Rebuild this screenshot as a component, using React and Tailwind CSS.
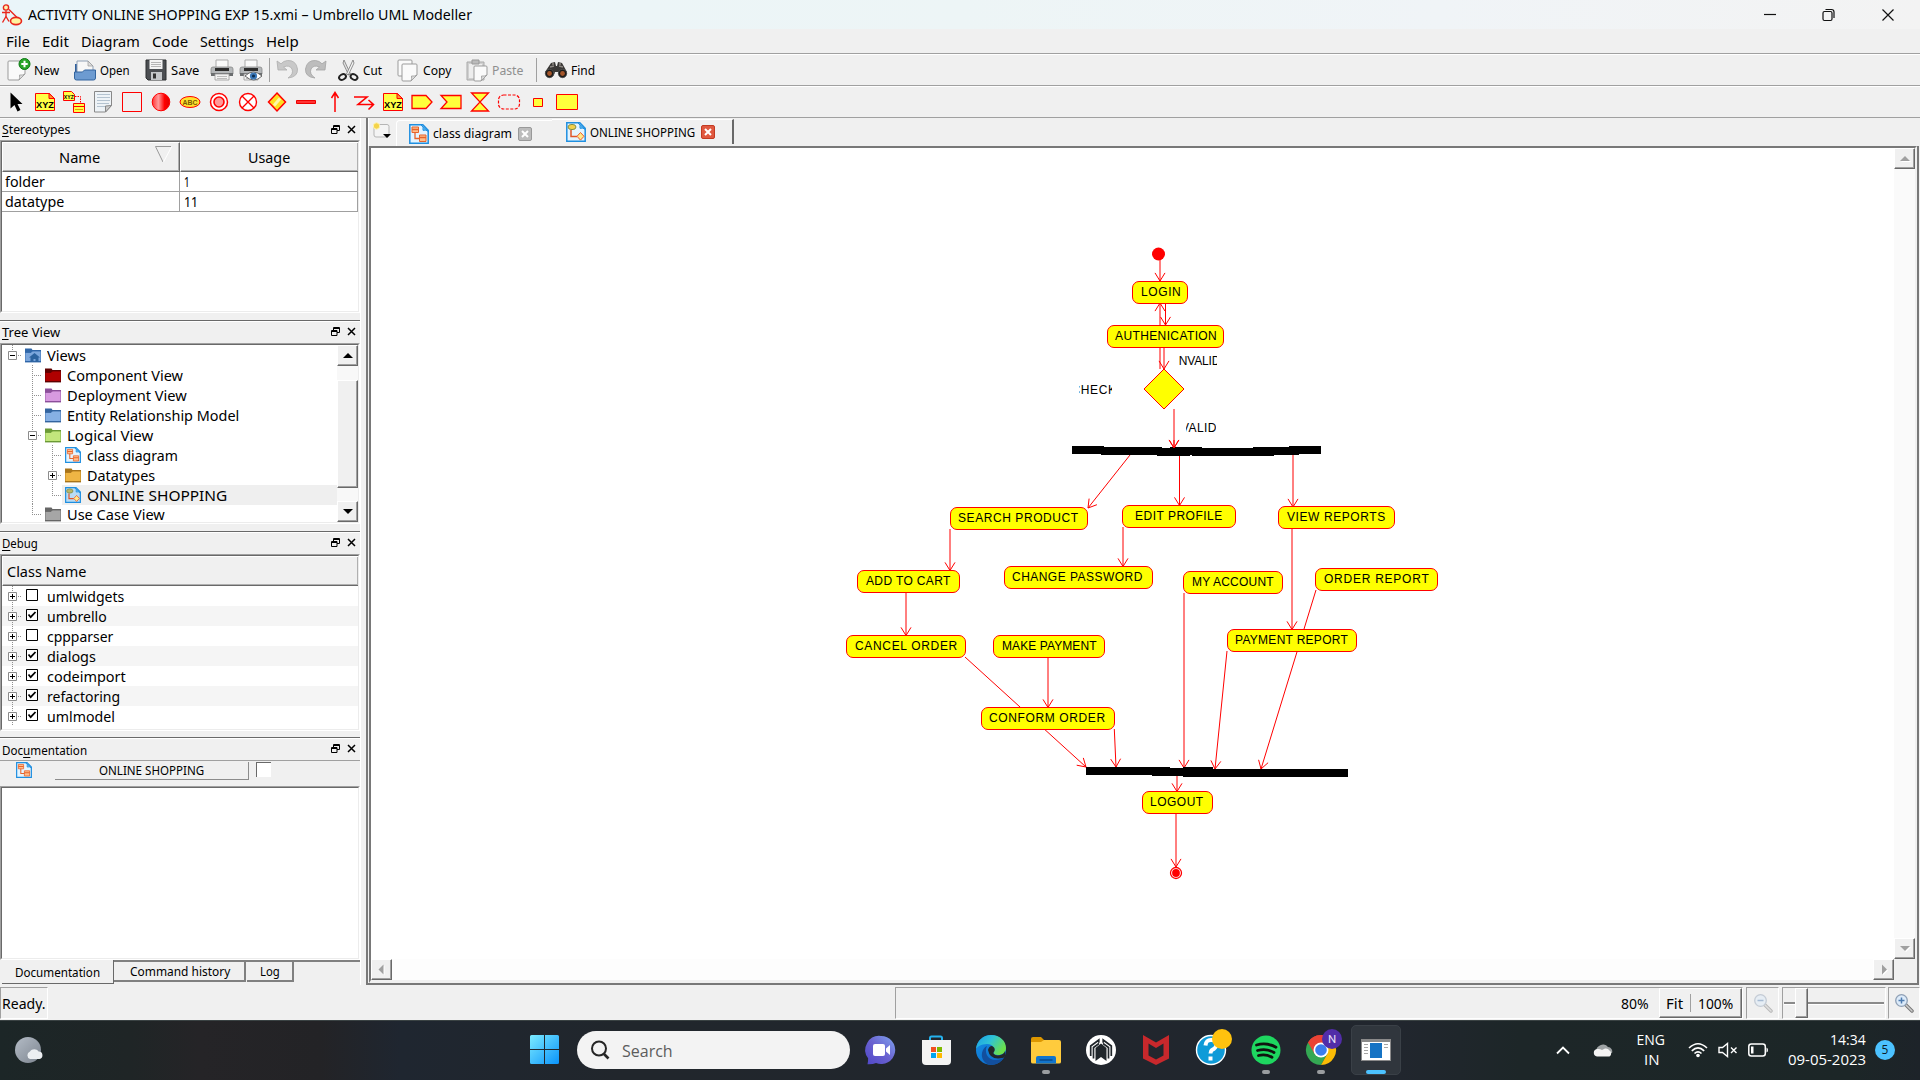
import React, { useLayoutEffect, useRef } from "react";

/* Single line of text fitted to a given width, either by condensing or by tracking. */
function Fit({ w, children, className = "", track = false }) {
  const ref = useRef(null);
  useLayoutEffect(() => {
    const el = ref.current;
    const natural = el.offsetWidth;
    if (!natural) return;
    if (track) {
      el.style.letterSpacing = (w - natural) / Math.max(1, el.textContent.length) + "px";
    } else {
      el.style.transform = "scaleX(" + w / natural + ")";
    }
  }, [w, track]);
  return (
    <span className={"inline-block shrink-0 whitespace-nowrap " + className} style={{ width: w }}>
      <span ref={ref} className="inline-block origin-left whitespace-nowrap">
        {children}
      </span>
    </span>
  );
}

function Svg({ w = 24, h = 24, vb, children, className = "" }) {
  return (
    <svg width={w} height={h} viewBox={vb || "0 0 " + w + " " + h} className={"block shrink-0 " + className} fill="none">
      {children}
    </svg>
  );
}

/* ---------- toolbar icons ---------- */
const Page = ({ x = 3, y = 3, w = 16, h = 19 }) => (
  <g>
    <path d={`M${x + 1} ${y}h${w - 2}q1 0 1 1v${h - 7}l-6 6h-${w - 7}q-1 0-1-1v-${h - 2}q0-1 1-1z`} fill="#fafafa" stroke="#9b9b9b" />
    <path d={`M${x + w} ${y + h - 6}l-6 6q1-2 .5-5q3 .5 5.500-1z`} fill="#ddd" stroke="#9b9b9b" strokeWidth=".8" />
  </g>
);
const NewIcon = () => (
  <Svg>
    <Page x={1} y={3} w={17} h={19} />
    <circle cx="17.500" cy="6" r="5.500" fill="#2aa52a" stroke="#0b7a12" />
    <path d="M17.500 2.800v6.400M14.300 6h6.400" stroke="#fff" strokeWidth="2" />
  </Svg>
);
const OpenIcon = () => (
  <Svg>
    <path d="M2 6h6l2 3v10H2z" fill="#2f5f9c" />
    <path d="M4 3h11l5 5v10H4z" fill="#f7f7f7" stroke="#8fa0b5" />
    <path d="M15 3v5h5z" fill="#ddd" stroke="#999" strokeWidth=".7" />
    <path d="M1.500 14h8l2-2h11v8q0 2-2 2h-17q-2 0-2-2z" fill="#6d9bd1" stroke="#34659f" />
  </Svg>
);
const SaveIcon = () => (
  <Svg>
    <path d="M2 2h20v20H4l-2-2z" fill="#4b4e52" stroke="#2d2f31" />
    <path d="M5.500 2h13v9h-13z" fill="#f4f4f4" />
    <path d="M7 4.500h10M7 6.500h10M7 8.500h10" stroke="#b5b5b5" />
    <path d="M7 14h11v8H7z" fill="#c4c7ca" />
    <path d="M9 15.500h3v5H9z" fill="#333" />
  </Svg>
);
const Printer = () => (
  <g>
    <path d="M6 2h12v8H6z" fill="#fafafa" stroke="#aaa" />
    <path d="M3 9h18q2 0 2 2v5H1v-5q0-2 2-2z" fill="#b4b7b9" stroke="#888" strokeWidth=".8" />
    <path d="M5 10h14v3H5z" fill="#2d2d2d" />
    <path d="M1 15h22v3H1z" fill="#6a6d6f" />
    <path d="M5 16h14v6H5z" fill="#f2f2f2" stroke="#999" strokeWidth=".8" />
    <path d="M7 18.500h10M7 20.500h10" stroke="#bbb" />
  </g>
);
const PrintIcon = () => (
  <Svg>
    <Printer />
  </Svg>
);
const PreviewIcon = () => (
  <Svg>
    <Printer />
    <path d="M6 18q8-8 17 0q-8 8-17 0z" fill="#fff" stroke="#666" />
    <circle cx="14.500" cy="18" r="3.600" fill="#3b78b8" />
    <circle cx="14.500" cy="18" r="1.600" fill="#0c2d50" />
  </Svg>
);
const undoPath = "M2 3l1 9h9l-3.500-3q6-2.500 8.500 2q2 5-4 9q10-1 9.500-9q-1.500-9-10-8.500q-4 .3-6.500 3.300z";
const UndoIcon = () => (
  <Svg>
    <path d={undoPath} fill="#c8c8c8" stroke="#adadad" strokeWidth=".8" />
  </Svg>
);
const RedoIcon = () => (
  <Svg>
    <g transform="translate(24 0) scale(-1 1)">
      <path d={undoPath} fill="#bdbdbd" stroke="#a3a3a3" strokeWidth=".8" />
    </g>
  </Svg>
);
const CutIcon = () => (
  <Svg>
    <path d="M8 2l6.500 14-1.800 1L7 5z" fill="#e2e2e2" stroke="#777" strokeWidth=".8" />
    <path d="M17 2L10.500 16l1.800 1L18 5z" fill="#f5f5f5" stroke="#777" strokeWidth=".8" />
    <ellipse cx="6.500" cy="19" rx="3.600" ry="2.600" transform="rotate(-30 6.500 19)" stroke="#222" strokeWidth="2" />
    <ellipse cx="18" cy="19" rx="3.600" ry="2.600" transform="rotate(30 18 19)" stroke="#222" strokeWidth="2" />
  </Svg>
);
const CopyIcon = () => (
  <Svg>
    <Page x={2} y={2} w={14} h={16} />
    <Page x={6} y={6} w={15} h={17} />
  </Svg>
);
const PasteIcon = () => (
  <Svg>
    <path d="M2 4h17v18H2z" fill="#d0d0d0" stroke="#aaa" />
    <path d="M4 6h13v14H4z" fill="#ededed" />
    <path d="M7 2h7v4H7z" fill="#bbb" stroke="#999" />
    <Page x={9} y={8} w={13} h={15} />
  </Svg>
);
const FindIcon = () => (
  <Svg>
    <path d="M7 5l4-1 1 4h1l1-4 4 1 5 9q0 5-4 5.500-4-.5-5-5.500h-3q-1 5-5 5.500-4-.5-5-5.500z" fill="#3a3836" />
    <path d="M8 6l2 0M15 6h2M6 9l4-1M15 8l4 1" stroke="#8d8883" strokeWidth="1.300" />
    <circle cx="5.500" cy="15.500" r="4.200" fill="#1c1b1a" stroke="#555" strokeWidth=".8" />
    <circle cx="18.500" cy="15.500" r="4.200" fill="#1c1b1a" stroke="#555" strokeWidth=".8" />
    <circle cx="5.500" cy="15.500" r="2.400" fill="#a5562a" />
    <circle cx="18.500" cy="15.500" r="2.400" fill="#a5562a" />
  </Svg>
);

const mainTools = [
  { icon: NewIcon, label: "New", tw: 25, cls: "w-[66px]" },
  { icon: OpenIcon, label: "Open", tw: 30, cls: "w-[71px]" },
  { icon: SaveIcon, label: "Save", tw: 28, cls: "w-[66px]" },
  { icon: PrintIcon, cls: "w-[29px]" },
  { icon: PreviewIcon, cls: "w-[29px]" },
  { sep: true, cls: "w-[7px]" },
  { icon: UndoIcon, cls: "w-[29px]" },
  { icon: RedoIcon, cls: "w-[32px]" },
  { icon: CutIcon, label: "Cut", tw: 19, cls: "w-[60px]" },
  { icon: CopyIcon, label: "Copy", tw: 28, cls: "w-[69px]" },
  { icon: PasteIcon, label: "Paste", tw: 31, cls: "w-[70px]", dim: true },
  { sep: true, cls: "w-[9px]" },
  { icon: FindIcon, label: "Find", tw: 24, cls: "w-[60px]" },
];

const XYZ = () => (
  <g>
    <path d="M1.500 2.500h14l5 5v12h-19z" fill="#ffff45" stroke="#f00" />
    <path d="M15 2.500v5h5.500z" fill="#ff9a2e" stroke="#f00" />
    <text x="11" y="17" textAnchor="middle" fontSize="9.500" fontWeight="700" fill="#000" textLength="18" lengthAdjust="spacingAndGlyphs" fontFamily="Liberation Sans, sans-serif">XYZ</text>
  </g>
);
const umlTools = [
  <path d="M5.500 1.500v16l4-3.500 3 6.500 3-1.500-3-6h5z" fill="#000" />,
  <XYZ />,
  <g>
    <path d="M.5 .5h8l3 3v6h-11z" fill="#ff4" stroke="#f00" />
    <text x="5.800" y="8" textAnchor="middle" fontSize="6" fontWeight="700" fill="#000" textLength="10" lengthAdjust="spacingAndGlyphs" fontFamily="Liberation Sans, sans-serif">XYZ</text>
    <path d="M12 5.500h5.500V12" stroke="#f00" strokeDasharray="1.500 1" />
    <path d="M10.500 12.500h11v9h-11zM10.500 15.500h11" fill="#ffff45" stroke="#f00" />
    <path d="M12 18.500h8" stroke="#e0a000" />
  </g>,
  <g>
    <path d="M2.500 .5h17v14l-6 6.500h-11z" fill="#eef3f7" stroke="#888" />
    <path d="M5 3.500h13M5 6.500h13M5 9.500h13M5 12.500h12M5 15.500h8" stroke="#b4c3d0" />
    <path d="M19.500 14.500l-6 6.500v-6z" fill="#ccc" stroke="#888" />
  </g>,
  <path d="M1.500 1.500h19v19h-19z" stroke="#f00" />,
  <g>
    <defs>
      <linearGradient id="start" x1="0" y1="0" x2="1" y2="0">
        <stop offset="0" stopColor="#f33" />
        <stop offset=".35" stopColor="#ff9c9c" />
        <stop offset=".7" stopColor="#f00" />
        <stop offset="1" stopColor="#d00" />
      </linearGradient>
    </defs>
    <circle cx="11" cy="11" r="8.800" fill="url(#start)" stroke="#f00" />
  </g>,
  <g>
    <ellipse cx="11" cy="11" rx="10" ry="5.500" fill="#ffe22e" stroke="#f00" />
    <text x="11" y="14" textAnchor="middle" fontSize="7.500" fontWeight="700" fill="#7a5a00" textLength="15" lengthAdjust="spacingAndGlyphs" fontFamily="Liberation Sans, sans-serif">ABC</text>
  </g>,
  <g>
    <circle cx="11" cy="11" r="8.500" fill="#fff" stroke="#f00" strokeWidth="1.500" />
    <circle cx="11" cy="11" r="5" fill="#f99" stroke="#f00" strokeWidth="1.600" />
  </g>,
  <g stroke="#f00" strokeWidth="1.400">
    <circle cx="11" cy="11" r="8.500" fill="#fff" />
    <path d="M5 5l12 12M17 5L5 17" />
  </g>,
  <g>
    <path d="M11 2l8.500 9-8.500 9-8.500-9z" fill="#ffdf20" stroke="#f00" strokeWidth="1.500" />
    <path d="M8 14.500l6-7" stroke="#fff9a8" strokeWidth="3" />
  </g>,
  <path d="M1.500 9.500h19v3h-19z" fill="#f33" stroke="#e00" />,
  <path d="M11 21V2M7.500 7L11 1.500 14.500 7" stroke="#f00" strokeWidth="1.500" />,
  <path d="M1 6h13L5 13.500h15M15.500 9l5 4.500-5 5" stroke="#f00" strokeWidth="1.600" />,
  <XYZ />,
  <path d="M1 4.500h14l6 6.500-6 6.500H1z" fill="#ffff3c" stroke="#f00" strokeWidth="1.300" />,
  <path d="M1 4.500h20v13H1l6-6.500z" fill="#ffff3c" stroke="#f00" strokeWidth="1.300" />,
  <path d="M2.500 2h17L2.500 20h17z" fill="#ffff3c" stroke="#f00" strokeWidth="1.300" />,
  <rect x="0.500" y="4" width="21" height="14" rx="5" stroke="#f00" strokeWidth="1.200" strokeDasharray="3 1.500" />,
  <path d="M6.500 7.500h9v8h-9z" fill="#ffff3c" stroke="#f80000" />,
  <path d="M.5 3.500h21v15H.5z" fill="#ffff3c" stroke="#f00" />,
];

/* ---------- small shared pieces ---------- */
function DiagramIcon({ size = 16, activity = false, selected = false }) {
  return (
    <Svg w={size} h={size} vb="0 0 20 20">
      <path d="M.8.8h13l5.400 5.400v13H.8z" fill={selected ? "#b8dcf5" : "#e4f4ff"} stroke="#1f8fe0" strokeWidth="1.500" />
      <path d="M12 .8q3 2 2 5.500 3-.8 5.200 1z" fill="#5cb8f0" stroke="#1f8fe0" />
      {activity ? (
        <g>
          <ellipse cx="6" cy="5" rx="4" ry="2.600" fill={selected ? "#b9b56a" : "#f2d04a"} stroke="#7f8f4a" />
          <path d="M5 8v6.500h6" stroke="#e0552a" strokeWidth="1.500" />
          <path d="M14.500 10.500l3.500 3.800-3.500 3.800-3.500-3.800z" fill="#ffe98a" stroke="#f05a2a" />
        </g>
      ) : (
        <g>
          <path d="M3 3h6.500v5.500H3zM10.500 11H17v6.500h-6.500z" fill="#ffbe8c" stroke="#e8632a" />
          <path d="M3 5.500h6.500M10.500 13.500H17M6 8.500v6h4.500" stroke="#e8632a" strokeWidth="1.300" />
        </g>
      )}
    </Svg>
  );
}

function Folder({ light, dark, home }) {
  return (
    <Svg w={16} h={16}>
      <path d="M0 1.500h6.500l1 1.500H16v4H0z" fill={dark} />
      <path d="M0 5.500h6l1.500-1.500H16V15H0z" fill={light} stroke={dark} strokeWidth=".8" />
      <path d="M0 14.500h16" stroke={dark} />
      {home && <path d="M4 10.500l5.500-4.500L15 10.500h-1.500V15h-3v-3h-2v3h-3v-4.500z" fill="#2c639f" />}
    </Svg>
  );
}

function Guide({ kind, box }) {
  const c = "#909090";
  return (
    <Svg w={20} h={20}>
      {kind !== "blank" && (
        <g stroke={c} strokeDasharray="1 1">
          {kind === "root" && <path d="M10.500 0v10M10 10.500h10" />}
          {kind === "tee" && <path d="M10.500 0v20M10 10.500h10" />}
          {kind === "bar" && <path d="M10.500 0v20" />}
          {kind === "end" && <path d="M10.500 0v10M10 10.500h10" />}
        </g>
      )}
      {box && (
        <g>
          <path d="M6.500 6.500h8v8h-8z" fill="#fff" stroke="#8c8c8c" />
          <path d={box === "plus" ? "M8 10.500h5M10.500 8v5" : "M8 10.500h5"} stroke="#000" />
        </g>
      )}
    </Svg>
  );
}

function Arrow({ dir, dim }) {
  const d = { up: "M0 6l5-5 5 5z", down: "M0 1l5 5 5-5z", left: "M6.500-1.500l-5 5 5 5z", right: "M3-1.500l5 5-5 5z" }[dir];
  return (
    <Svg w={10} h={7} className="overflow-visible">
      {dim && <path d={d} fill="#fff" transform="translate(1 1)" />}
      <path d={d} fill={dim ? "#a0a0a0" : "#000"} />
    </Svg>
  );
}

const raised = "border border-t-white border-l-white border-r-[#696969] border-b-[#696969] bg-[#f0f0f0] shadow-[inset_-1px_-1px_0_#a0a0a0]";
function ScrollButton({ dir, dim }) {
  return (
    <div className={"flex h-[21px] w-[21px] shrink-0 items-center justify-center " + raised}>
      <Arrow dir={dir} dim={dim} />
    </div>
  );
}

function Dock({ title, accel, tw, h, first, gap, titleGap = "", children }) {
  return (
    <section className="flex flex-col bg-[#f0f0f0]" style={{ height: h }}>
      <header
        className={
          "flex shrink-0 items-center pl-[2px] text-[13px] leading-none " +
          (first ? "h-[22px] border-t border-[#fafafa]" : "h-[23px] border-t border-[#696969] shadow-[inset_0_1px_0_#fff]")
        }
      >
        <Fit w={tw} className={titleGap}>
          {title.slice(0, accel)}
          <span className="underline underline-offset-2">{title[accel]}</span>
          {title.slice(accel + 1)}
        </Fit>
        <Svg w={9} h={9} className="-mt-px ml-auto">
          <path d="M2.500 3V.5h6v5H6M2.500 1.500h6M.5 3.500h5.500v5H.5zM.5 4.500H6" stroke="#000" />
        </Svg>
        <Svg w={9} h={9} className="-mt-px mr-[4px] ml-[7px]">
          <path d="M1 1l7 7M8 1L1 8" stroke="#000" strokeWidth="1.500" />
        </Svg>
      </header>
      <div className={"flex min-h-0 flex-1 flex-col " + gap}>{children}</div>
    </section>
  );
}

function Frame({ children, className = "" }) {
  return (
    <div className={"min-h-0 flex-1 border border-t-[#a0a0a0] border-l-[#a0a0a0] border-r-white border-b-white " + className}>
      <div className="h-full overflow-hidden border border-t-[#696969] border-l-[#696969] border-r-[#ececec] border-b-[#ececec] bg-white">
        {children}
      </div>
    </div>
  );
}

const header = "flex items-center border border-t-white border-l-white border-r-[#696969] border-b-[#696969] bg-[#f0f0f0] shadow-[inset_-1px_-1px_0_#b0b0b0]";

/* ---------- left docks ---------- */
const folders = {
  home: <Folder light="#7ba6dc" dark="#2f66a8" home />,
  red: <Folder light="#b00000" dark="#5e0000" />,
  violet: <Folder light="#d79ae0" dark="#8c4f9a" />,
  blue: <Folder light="#86b0e4" dark="#33649f" />,
  green: <Folder light="#c2e67c" dark="#6b9a35" />,
  orange: <Folder light="#eeb544" dark="#a8741a" />,
  grey: <Folder light="#a6a6a6" dark="#666" />,
};
const tree = [
  { g: [["root", "minus"]], icon: folders.home, t: "Views", w: 39 },
  { g: [["blank"], ["tee"]], icon: folders.red, t: "Component View", w: 116 },
  { g: [["blank"], ["tee"]], icon: folders.violet, t: "Deployment View", w: 120 },
  { g: [["blank"], ["tee"]], icon: folders.blue, t: "Entity Relationship Model", w: 172 },
  { g: [["blank"], ["tee", "minus"]], icon: folders.green, t: "Logical View", w: 86 },
  { g: [["blank"], ["bar"], ["tee"]], icon: <DiagramIcon />, t: "class diagram", w: 91 },
  { g: [["blank"], ["bar"], ["tee", "plus"]], icon: folders.orange, t: "Datatypes", w: 68 },
  { g: [["blank"], ["bar"], ["end"]], icon: <DiagramIcon activity selected />, t: "ONLINE SHOPPING", w: 140, sel: true },
  { g: [["blank"], ["end"]], icon: folders.grey, t: "Use Case View", w: 98 },
];
const debugRows = [
  ["umlwidgets", 77, false],
  ["umbrello", 60, true],
  ["cppparser", 66, false],
  ["dialogs", 49, true],
  ["codeimport", 79, true],
  ["refactoring", 73, true],
  ["umlmodel", 68, true],
];

function LeftDocks() {
  return (
    <aside className="flex w-[361px] shrink-0 flex-col border-r border-white text-[15px] leading-none">
      <Dock title="Stereotypes" accel={0} tw={68} h={202} first gap="pb-[7px]">
        <Frame>
          <div className="flex h-[30px] w-[357px]">
            <div className={"w-[178px] pl-[56px] " + header}>
              <Fit w={41}>Name</Fit>
              <Svg w={17} h={17} className="-mt-[6px] ml-[55px]">
                <path d="M16 .5H.5L8 16" stroke="#999" />
                <path d="M16.500 1L8.500 16" stroke="#fff" />
              </Svg>
            </div>
            <div className={"flex-1 justify-center pr-[2px] " + header}>
              <Fit w={42}>Usage</Fit>
            </div>
          </div>
          {[["folder", 40, "1", 6], ["datatype", 59, "11", 14]].map(([a, aw, b, bw]) => (
            <div key={a} className="flex h-[20px] w-[356px] border-r border-b border-[#a0a0a0]">
              <div className="flex w-[178px] items-center border-r border-[#a0a0a0] pl-[3px]">
                <Fit w={aw}>{a}</Fit>
              </div>
              <div className="flex items-center pl-[4px]">
                <Fit w={bw}>{b}</Fit>
              </div>
            </div>
          ))}
        </Frame>
      </Dock>

      <Dock title="Tree View" accel={0} tw={58} h={211} gap="pb-[7px]">
        <Frame>
          <div className="flex h-full">
            <div className="flex-1">
              {tree.map((r, i) => (
                <div key={r.t} className={"flex items-center " + (i === tree.length - 1 ? "h-[18px]" : "h-[20px]")}>
                  {r.g.map(([k, b], j) => (
                    <Guide key={j} kind={k} box={b} />
                  ))}
                  <div className={"flex h-full flex-1 items-center gap-[6px] pl-[3px] " + (r.sel ? "bg-[#efefef]" : "")}>
                    {r.icon}
                    <Fit w={r.w}>{r.t}</Fit>
                  </div>
                </div>
              ))}
            </div>
            <div className="flex w-[21px] flex-col bg-[#f8f8f8]">
              <ScrollButton dir="up" />
              <div className={"mt-[14px] h-[108px] " + raised} />
              <div className="flex-1" />
              <ScrollButton dir="down" />
            </div>
          </div>
        </Frame>
      </Dock>

      <Dock title="Debug" accel={0} tw={36} h={206} gap="pb-[6px]">
        <Frame>
          <div className={"h-[30px] w-[357px] pl-[4px] " + header}>
            <Fit w={79}>Class Name</Fit>
          </div>
          {debugRows.map(([t, w, on], i) => (
            <div key={t} className={"flex h-[20px] items-center " + (i % 2 ? "bg-[#f5f5f5]" : "bg-white")}>
              <Guide kind="tee" box="plus" />
              <Svg w={12} h={12} className="mr-[9px] ml-[4px] -mt-[3px]">
                <path d="M.5.5h11v11H.5z" fill="#fff" stroke="#000" />
                {on && <path d="M2.500 5.500l2.200 2.700L9.500 3" stroke="#000" strokeWidth="1.800" />}
              </Svg>
              <Fit w={w}>{t}</Fit>
            </div>
          ))}
        </Frame>
      </Dock>

      <Dock title="Documentation" accel={3} tw={85} h={248} gap="" titleGap="pt-[2px]">
        <div className="flex h-[26px] shrink-0 items-start border-t border-[#a0a0a0] pt-px pl-[16px] text-[13px]">
          <DiagramIcon />
          <div className="ml-[23px] flex h-[18px] w-[194px] items-center justify-center border-r border-b border-[#8c8c8c]">
            <Fit w={105}>ONLINE SHOPPING</Fit>
          </div>
          <div className="ml-[7px] h-[15px] w-[15px] border-t border-l border-[#696969] bg-white" />
        </div>
        <Frame>
          <div />
        </Frame>
        <div className="flex h-[25px] shrink-0 text-[13px]">
          <div className="ml-[2px] flex h-[24px] w-[112px] items-center justify-center border-r border-b border-[#696969] pt-[2px]">
            <Fit w={85}>Documentation</Fit>
          </div>
          <div className="flex flex-1 border-t-2 border-[#808080]">
            <div className="flex h-[20px] w-[132px] items-center justify-center border-r-2 border-b-2 border-[#808080] pt-px pl-px">
              <Fit w={100}>Command history</Fit>
            </div>
            <div className="ml-px flex h-[20px] w-[47px] items-center justify-center border-r-2 border-b-2 border-[#808080] pt-px pl-px">
              <Fit w={20}>Log</Fit>
            </div>
          </div>
        </div>
      </Dock>
    </aside>
  );
}

/* ---------- activity diagram ---------- */
const OX = 371;
const OY = 148;
const nodes = [
  ["LOGIN", 1132, 281, 56, 1141, 40],
  ["AUTHENICATION", 1107, 325, 117, 1115, 102],
  ["SEARCH PRODUCT", 950, 507.5, 138, 958, 121],
  ["EDIT PROFILE", 1122.5, 505.5, 113.5, 1135, 88],
  ["VIEW REPORTS", 1278.5, 506.5, 116.5, 1287, 99],
  ["ADD TO CART", 857.5, 570.5, 102.5, 866, 85],
  ["CHANGE PASSWORD", 1004, 566.5, 148.5, 1012, 131],
  ["MY ACCOUNT", 1183.5, 571.5, 99.500, 1192, 82],
  ["ORDER REPORT", 1315.5, 568.5, 122.5, 1324, 105],
  ["CANCEL ORDER", 846.5, 635.5, 119.5, 855, 103],
  ["MAKE PAYMENT", 993.5, 635.5, 112, 1002, 95],
  ["PAYMENT REPORT", 1227, 629.5, 130, 1235, 113],
  ["CONFORM ORDER", 981, 707.5, 133.5, 989, 117],
  ["LOGOUT", 1142, 791.5, 70.5, 1150, 54],
];
const edges = [
  [1160, 260, 1160, 281],
  [1160, 369, 1160, 303],
  [1165.5, 303, 1165.5, 325],
  [1164, 347, 1164, 369],
  [1174, 409, 1174, 448],
  [1130, 455, 1088, 508],
  [1179.5, 456, 1179.5, 505.5],
  [1293, 455, 1293, 507],
  [950, 529, 950, 570.5],
  [1123, 527, 1123, 566.5],
  [906, 592, 906, 635.5],
  [1292, 528, 1292, 629.5],
  [1316, 590, 1261, 769],
  [1227, 651, 1215, 769],
  [1184, 593, 1184, 768],
  [965, 657, 1086, 767],
  [1048, 657, 1048, 707.5],
  [1114.3, 729, 1116, 767],
  [1177, 776, 1177, 791.5],
  [1176, 813, 1176, 867],
];
const bars = [
  [1072, 446, 32, 8], [1101, 447, 61, 8], [1157, 448, 33, 8], [1170, 447, 32, 8], [1192, 448, 82, 8], [1253, 447, 46, 8], [1289, 446, 32, 8],
  [1086, 767, 84, 8], [1152, 768, 61, 8], [1183, 767, 30, 8], [1183, 769, 165, 8],
];
const labels = [
  ["INVALID", 1178.5, 354, 38.5, -3, 45],
  ["CHECK", 1078.5, 383, 33.5, -7, 45],
  ["VALID", 1186, 421, 30, -5, 36],
];

function edgePath([x1, y1, x2, y2]) {
  const a = Math.atan2(y2 - y1, x2 - x1);
  const p = (s) => [x2 - 9.500 * Math.cos(a + s), y2 - 9.500 * Math.sin(a + s)].map((v) => v.toFixed(1)).join(" ");
  return `M${x1} ${y1}L${x2} ${y2}M${p(0.55)}L${x2} ${y2}L${p(-0.55)}`;
}

function Diagram() {
  return (
    <div className="relative min-h-0 min-w-0 flex-1 overflow-hidden bg-white">
      <Svg w={1200} h={800} vb={`${OX} ${OY} 1200 800`} className="absolute top-0 left-0">
        {edges.map((e, i) => (
          <path key={i} d={edgePath(e)} stroke="#f00" />
        ))}
        {bars.map(([x, y, w, h], i) => (
          <rect key={i} x={x} y={y} width={w} height={h} fill="#000" shapeRendering="crispEdges" />
        ))}
        <circle cx="1158.500" cy="254" r="6.500" fill="#f00" />
        <path d="M1164 369l20 20-20 20-20-20z" fill="#ff0" stroke="#f00" />
        <path d="M1174 440v8M1169.300 440l4.700 8 4.700-8" stroke="#f00" />
        <circle cx="1176" cy="873" r="5.500" fill="#fff" stroke="#f00" strokeWidth="1.300" />
        <circle cx="1176" cy="873" r="3.900" fill="#f00" />
      </Svg>
      {nodes.map(([t, x, y, w, tx, tw]) => (
        <div
          key={t}
          className="absolute flex h-[23px] items-center rounded-[7px] border border-[#ff0000] bg-[#ffff00] pb-px font-['Liberation_Sans',sans-serif] text-[12px] leading-none text-black"
          style={{ left: Math.floor(x) - OX, top: Math.floor(y) - OY, width: Math.ceil(w), paddingLeft: tx - Math.floor(x) - 1 }}
        >
          <Fit w={tw} track>{t}</Fit>
        </div>
      ))}
      {labels.map(([t, x, y, w, dx, tw]) => (
        <div
          key={t}
          className="absolute h-[14px] overflow-hidden font-['Liberation_Sans',sans-serif] text-[12px] leading-[14px] text-black"
          style={{ left: x - OX, top: y - OY, width: w }}
        >
          <div style={{ marginLeft: dx }}>
            <Fit w={tw} track>{t}</Fit>
          </div>
        </div>
      ))}
    </div>
  );
}

function CloseBox({ red }) {
  return (
    <Svg w={14} h={14}>
      <rect x=".5" y=".5" width="13" height="13" rx="1.500" fill={red ? "#e0583f" : "#bcbcbc"} stroke={red ? "#c23a22" : "#999"} />
      <path d="M4 4l6 6M10 4l-6 6" stroke="#fff" strokeWidth="2" />
    </Svg>
  );
}

function Workspace() {
  return (
    <main className="ml-[5px] flex min-w-0 flex-1 flex-col border-l-2 border-[#787878] text-[13px] leading-none">
      <div className="flex h-[28px] shrink-0 border-l border-white pl-[2px]">
        <Svg w={20} h={18} className="mt-[4px] ml-px">
          <path d="M3 2.500h12q2 0 2 2V13q0 2-2 2H4q-2 0-2-2V5z" fill="#f4f4f4" stroke="#b5b5b5" />
          <circle cx="4.500" cy="4" r="3.200" fill="#f4d34a" stroke="#fff3b0" />
          <path d="M11 12h8l-4 4z" fill="#000" />
        </Svg>
        <div className="mt-[2px] ml-[4px] flex h-[26px] w-[156px] items-center rounded-tl-sm border-t border-l border-white pl-[12px]">
          <DiagramIcon size={20} />
          <Fit w={79} className="ml-[4px]">class diagram</Fit>
          <span className="ml-[6px]">
            <CloseBox />
          </span>
        </div>
        <div className="mt-px flex h-[25px] w-[182px] items-center border-t border-r-2 border-t-white border-r-[#696969] pl-[14px]">
          <DiagramIcon size={20} activity />
          <Fit w={105} className="ml-[4px]">ONLINE SHOPPING</Fit>
          <span className="ml-[6px]">
            <CloseBox red />
          </span>
        </div>
      </div>
      <div className="mr-px flex min-h-0 flex-1 flex-col border-r-2 border-b-2 border-[#787878] pl-px">
        <div className="flex min-h-0 flex-1 flex-col border-t-2 border-r-2 border-b-3 border-l-2 border-t-[#787878] border-r-[#f0f0f0] border-b-[#f0f0f0] border-l-[#787878] bg-white">
          <div className="flex min-h-0 flex-1">
            <Diagram />
            <div className="flex w-[21px] flex-col justify-between bg-[#fafafa]">
              <ScrollButton dir="up" dim />
              <ScrollButton dir="down" dim />
            </div>
          </div>
          <div className="flex h-[21px] shrink-0 bg-[#f0f0f0]">
            <div className="flex flex-1 justify-between bg-[#fdfdfd]">
              <ScrollButton dir="left" dim />
              <ScrollButton dir="right" dim />
            </div>
            <div className="w-[21px]" />
          </div>
        </div>
      </div>
    </main>
  );
}

/* ---------- status bar ---------- */
const sunk = "border-t border-l border-r border-b border-t-[#a0a0a0] border-l-[#a0a0a0] border-r-white border-b-white";
function Magnifier({ plus, dim }) {
  return (
    <Svg w={20} h={20} className={dim ? "opacity-45" : ""}>
      <path d="M12 12l6 6" stroke="#777" strokeWidth="3.500" strokeLinecap="round" />
      <path d="M12 12l6 6" stroke="#ccc" strokeWidth="1.500" strokeLinecap="round" />
      <circle cx="7.500" cy="7.500" r="5.800" fill="#dcebfa" stroke="#8fa0b5" strokeWidth="1.300" />
      <path d={plus ? "M4.500 7.500h6M7.500 4.500v6" : "M4.500 7.500h6"} stroke="#4f7cb0" strokeWidth="1.500" />
    </Svg>
  );
}
function StatusBar() {
  return (
    <footer className="flex h-[35px] shrink-0 items-start bg-[#f0f0f0] pt-[2px] text-[15px] leading-none">
      <div className={"flex h-[32px] w-[48px] items-center pl-px " + sunk}>
        <Fit w={44}>Ready.</Fit>
      </div>
      <div className={"ml-[847px] flex h-[32px] w-[848px] items-center justify-end " + sunk}>
        <Fit w={28} className="mr-[10px]">80%</Fit>
        <div className={"flex h-[30px] w-[83px] items-center pl-[6px] " + raised}>
          <Fit w={17}>Fit</Fit>
          <div className="mx-[7px] h-[18px] w-px bg-[#a0a0a0]" />
          <Fit w={35}>100%</Fit>
        </div>
      </div>
      <div className={"ml-[3px] flex h-[32px] w-[33px] items-center justify-center " + sunk}>
        <Magnifier dim />
      </div>
      <div className={"ml-[3px] flex h-[32px] w-[104px] items-center px-px " + sunk}>
        <div className="h-[3px] w-[11px] border-t-2 border-b border-t-[#8a8a8a] border-b-white" />
        <div className={"h-[30px] w-[13px] " + raised} />
        <div className="h-[3px] flex-1 border-t-2 border-b border-t-[#8a8a8a] border-b-white" />
      </div>
      <div className={"ml-[2px] flex h-[32px] flex-1 items-center justify-center " + sunk}>
        <Magnifier plus />
      </div>
    </footer>
  );
}

/* ---------- taskbar ---------- */
const apps = [
  {
    k: "chat",
    art: (
      <g>
        <defs>
          <linearGradient id="chat" x1="0" y1="1" x2="1" y2="0">
            <stop offset="0" stopColor="#4f46c8" />
            <stop offset=".5" stopColor="#6a62d0" />
            <stop offset="1" stopColor="#7fa4f0" />
          </linearGradient>
        </defs>
        <path d="M15 1a14 14 0 1 1-5 27q-3 1.500-8.500 1.300q.8-3 .6-6A14 14 0 0 1 15 1z" fill="url(#chat)" />
        <rect x="7" y="9" width="12" height="12" rx="2" fill="#fff" />
        <path d="M20 13.500l4-3.500v10l-4-3.500z" fill="#fff" />
      </g>
    ),
  },
  {
    k: "store",
    art: (
      <g>
        <path d="M9 7V3q0-1.500 1.500-1.500h9Q21 1.500 21 3v4" stroke="#25b2ee" strokeWidth="2" />
        <path d="M1 5h29v21q0 4-4 4H5q-4 0-4-4z" fill="#f3f3f3" />
        <path d="M10 12h5v5h-5z" fill="#f25022" />
        <path d="M16 12h5v5h-5z" fill="#7fba00" />
        <path d="M10 18h5v5h-5z" fill="#00a4ef" />
        <path d="M16 18h5v5h-5z" fill="#ffb900" />
      </g>
    ),
  },
  {
    k: "edge",
    art: (
      <g>
        <defs>
          <linearGradient id="e1" x1="0" y1="0" x2="1" y2=".5">
            <stop offset="0" stopColor="#1a9de8" />
            <stop offset=".5" stopColor="#2fc3d6" />
            <stop offset="1" stopColor="#6be04c" />
          </linearGradient>
          <linearGradient id="e2" x1="0" y1="0" x2="1" y2="1">
            <stop offset="0" stopColor="#1590e6" />
            <stop offset="1" stopColor="#0a63c4" />
          </linearGradient>
        </defs>
        <circle cx="15" cy="15" r="15" fill="url(#e2)" />
        <path d="M0 14C1 5 8 0 15 0c9 0 15 6 15 13 0 5-4 7-8 7-3 0-5-1-4.500-2.500C20 14 17 9 11 9 5 9 1 12 0 14z" fill="url(#e1)" />
        <path d="M11 11c-3 6 0 14 9 14 3.500 0 6-1 7.800-2.200C25 27.500 20 30 15 30 8 29 5 23 6 18c.5-3 2.500-6 5-7z" fill="#124f9e" />
        <path d="M12 15q1-4 4-4 3.500 1.500 2.500 5-1.500 1.500-1 2.500 1.500 2.500 6 1.800 4.500-1 5.500-4.300Q30 22 27.500 22.800 14 26 12 15z" fill="#232629" />
      </g>
    ),
  },
  {
    k: "files",
    dot: true,
    art: (
      <g>
        <path d="M0 4q0-2 2-2h8l3 3v6H0z" fill="#dd9700" />
        <path d="M0 7h10l3-2h15q2 0 2 2v20q0 1.500-2 1.500H2Q0 28.500 0 27z" fill="#ffcb3d" />
        <path d="M5 28.500V23q0-2 2-2h16q2 0 2 2v5.500z" fill="#1275cc" />
        <path d="M8.500 25h13" stroke="#0a4a8c" strokeWidth="1.500" />
      </g>
    ),
  },
  {
    k: "arch",
    art: (
      <g>
        <circle cx="15" cy="15" r="15" fill="#fff" />
        <path d="M4.700 21V11L12.800 5v2.800M25.300 21V11L17.200 5v2.800M7.500 23.500V12.500L13 8.500M22.500 23.500V12.500L17 8.500" stroke="#20262b" strokeWidth="1.700" />
        <path d="M9.500 26V13L15 8.500 20.500 13v13L15 22z" fill="#20262b" />
      </g>
    ),
  },
  { k: "shield", art: <path d="M2 0l13 7.500L28 0v23.500L15 30 2 23.500zM7.500 8.500v12L15 24.500l7.500-4v-12L15 13z" fill="#c8282c" fillRule="evenodd" /> },
  {
    k: "help",
    art: (
      <g>
        <circle cx="15" cy="15" r="14.500" fill="#0f9bd8" stroke="#fff" strokeWidth="1.400" />
        <path d="M9.500 10.500q.5-6 6-5.500 5.500.5 5 5-.5 3-4.500 5-1.500 1-1.500 3.500M14.500 21.500v4" stroke="#fff" strokeWidth="4" />
        <circle cx="26" cy="4" r="10" fill="#ffc20e" />
      </g>
    ),
  },
  {
    k: "music",
    dot: true,
    art: (
      <g>
        <circle cx="15" cy="15" r="14.500" fill="#1ed760" />
        <path d="M5.500 10q10-3 19.500 2.200M6.500 15.500q9-2.500 16.500 2M7.500 20.500q7-2 13.500 1.800" stroke="#10130f" strokeWidth="2.800" strokeLinecap="round" />
      </g>
    ),
  },
  {
    k: "browser",
    dot: true,
    art: (
      <g>
        <path d="M2 7.500A15 15 0 0 1 28 7.500L15 15z" fill="#ea4335" />
        <path d="M2 7.500A15 15 0 0 0 15 30l6.500-11.500L15 15z" fill="#34a853" />
        <path d="M28 7.500A15 15 0 0 1 15 30l6.500-11.500L15 7.500z" fill="#fbbc05" />
        <path d="M2 7.500L8.500 18.700 15 15l0-7.500h13A15 15 0 0 0 2 7.500z" fill="#ea4335" />
        <circle cx="15" cy="15" r="7.500" fill="#fff" />
        <circle cx="15" cy="15" r="5.800" fill="#3b7ded" />
        <circle cx="26" cy="4" r="10" fill="#512da8" />
        <text x="26" y="8" textAnchor="middle" fontSize="11.500" fill="#e8e0f8" fontFamily="Roboto, sans-serif">N</text>
      </g>
    ),
  },
  {
    k: "app",
    active: true,
    art: (
      <g>
        <path d="M0 4h30v22H0z" fill="#8a8a8a" />
        <path d="M1 7h28v18H1z" fill="#fff" />
        <path d="M9 8h12v15H9z" fill="#1673c4" />
        <path d="M3 9.500h4M3 12.500h4M3 15.500h4M3 18.500h4M23 9.500h4M23 12.500h4" stroke="#a5a5a5" />
      </g>
    ),
  },
];

function Taskbar() {
  return (
    <nav className="flex h-[60px] shrink-0 items-center border-t border-[#3a4243] bg-[linear-gradient(90deg,#1c2627_0px,#1f2526_130px,#252427_200px,#232326_320px,#1f2630_400px,#21262c_620px,#21262e_1400px,#1d2628_1520px,#1c2627_1850px,#1d2329_1920px)] pb-[2px] font-['Open_Sans','Noto_Sans',sans-serif] text-white">
      <Svg w={30} h={30} className="ml-[14px]">
        <defs>
          <linearGradient id="moon" x1="0" y1="0" x2="1" y2="1">
            <stop offset="0" stopColor="#b4bcc6" />
            <stop offset="1" stopColor="#7d8590" />
          </linearGradient>
        </defs>
        <circle cx="14" cy="15" r="13" fill="url(#moon)" />
        <path d="M16 24a4 4 0 0 1 0-7.500 5 5 0 0 1 8.500 0A3.800 3.800 0 0 1 25.500 24z" fill="#eceff2" />
      </Svg>
      <Svg w={29} h={29} className="ml-[486px]">
        <defs>
          <linearGradient id="win" x1="0" y1="0" x2="1" y2="1">
            <stop offset="0" stopColor="#7cebff" />
            <stop offset="1" stopColor="#0a93fb" />
          </linearGradient>
        </defs>
        <path d="M0 1.500Q0 0 1.500 0H14v14H0zM15 0h12.500Q29 0 29 1.500V14H15zM0 15h14v14H1.500Q0 29 0 27.500zM15 15h14v12.500q0 1.500-1.500 1.500H15z" fill="url(#win)" />
      </Svg>
      <div className="ml-[18px] flex h-[38px] w-[273px] items-center rounded-full bg-[#f3f3f3] text-[#5c5c5c]">
        <Svg w={20} h={20} className="ml-[13px]">
          <circle cx="9" cy="8.500" r="7" stroke="#262626" strokeWidth="2" />
          <path d="M14 14l4.500 4.500" stroke="#262626" strokeWidth="2.600" />
        </Svg>
        <Fit w={51} className="ml-[12px] pt-[2px] text-[16px] leading-none">Search</Fit>
      </div>
      <div className="ml-[6px] flex">
        {apps.map((a) => (
          <div
            key={a.k}
            className={
              "mr-[5px] flex h-[50px] w-[50px] flex-col items-center rounded-[5px] pt-[10px] " +
              (a.active ? "border border-[#3a4047] bg-[#30363d]" : "border border-transparent")
            }
          >
            <Svg w={30} h={30} className="-mt-px overflow-visible">
              {a.art}
            </Svg>
            {a.dot && <div className="mt-[5px] h-[4px] w-[8px] rounded-full bg-[#9a9da0]" />}
            {a.active && <div className="mt-[5px] h-[4px] w-[20px] rounded-full bg-[#4cc2ff]" />}
          </div>
        ))}
      </div>
      <div className="ml-auto flex items-center pr-[25px]">
        <Svg w={16} h={10}>
          <path d="M2 8.500l6-6 6 6" stroke="#fff" strokeWidth="1.800" />
        </Svg>
        <Svg w={20} h={14} className="ml-[22px]">
          <path d="M4 10a5 5 0 0 1 2-7 6 6 0 0 1 9 1 4.500 4.500 0 0 1 4 6z" fill="#9fa3a5" />
          <path d="M4 13.500a3.800 3.800 0 0 1 0-7.500q3-.5 5 1l3-1.500q3-.5 4.500 2A3.500 3.500 0 0 1 16.500 13.500z" fill="#f4f4f4" />
        </Svg>
        <div className="ml-[23px] flex w-[30px] flex-col items-center text-[14px] leading-[20px]">
          <Fit w={29}>ENG</Fit>
          <Fit w={15}>IN</Fit>
        </div>
        <Svg w={20} h={16} className="ml-[22px]">
          <path d="M1 6Q10-2.500 19 6M3.800 8.800q6.200-5.800 12.400 0M6.500 11.500q3.500-3.300 7 0" stroke="#fff" strokeWidth="1.600" />
          <circle cx="10" cy="13.500" r="1.800" fill="#fff" />
        </Svg>
        <Svg w={20} h={16} className="ml-[10px]">
          <path d="M1 5.500h3.500L9.500 1.500v13l-5-4H1z" stroke="#fff" strokeWidth="1.400" />
          <path d="M13 5.500l5.500 5.500M18.500 5.500L13 11" stroke="#fff" strokeWidth="1.400" />
        </Svg>
        <Svg w={20} h={14} className="ml-[10px]">
          <rect x=".8" y="1" width="16.500" height="12" rx="2.500" stroke="#fff" strokeWidth="1.500" />
          <path d="M3 3.500h2.500v7H3zM18.500 4.500v5q1.500-.5 1.500-2.500t-1.500-2.500z" fill="#fff" />
        </Svg>
        <div className="ml-[20px] flex w-[78px] flex-col items-end text-[14px] leading-[20px]">
          <Fit w={36}>14:34</Fit>
          <Fit w={78}>09-05-2023</Fit>
        </div>
        <div className="ml-[9px] flex h-[20px] w-[20px] items-center justify-center rounded-full bg-[#4cc2ff] text-[12px] leading-none text-[#0b1c28]">5</div>
      </div>
    </nav>
  );
}

const menus = [["File", 24, "ml-[6px]"], ["Edit", 27, "ml-[12px]"], ["Diagram", 59, "ml-[12px]"], ["Code", 36, "ml-[12px]"], ["Settings", 54, "ml-[12px]"], ["Help", 33, "ml-[12px]"]];

export default function App() {
  return (
    <div className="flex h-[1080px] w-[1920px] flex-col overflow-hidden bg-[#f0f0f0] font-['Noto_Sans',sans-serif] text-black">
      <div className="flex h-[29px] shrink-0 items-center bg-[linear-gradient(90deg,#eaf5f9,#edf5f6_50%,#f0f4f7_75%,#f3f3f3)] text-[15px] leading-none">
        <Svg w={22} h={22} className="ml-px">
          <circle cx="5" cy="3.500" r="2.600" fill="#fff3b0" stroke="#e8261c" strokeWidth="1.400" />
          <path d="M5 6.500v6M1 8.500h8M5 12.500l-3.500 6M5 12.500l3 5M8 5.500l8 8" stroke="#e8261c" strokeWidth="1.400" />
          <ellipse cx="15" cy="17" rx="5.500" ry="3.600" fill="#fff3a0" stroke="#e8261c" strokeWidth="1.600" />
        </Svg>
        <Fit w={444} className="ml-[5px]">ACTIVITY ONLINE SHOPPING EXP 15.xmi – Umbrello UML Modeller</Fit>
        <div className="mr-[25px] ml-auto flex items-center gap-[45px]">
          <Svg w={14} h={14}>
            <path d="M1 6.500h12" stroke="#111" strokeWidth="1.200" />
          </Svg>
          <Svg w={14} h={14}>
            <rect x="1" y="3.500" width="9" height="9" rx="1.500" stroke="#111" strokeWidth="1.200" />
            <path d="M3.500 1.500h6q2.500 0 2.500 2.500v6" stroke="#111" strokeWidth="1.200" />
          </Svg>
          <Svg w={14} h={14}>
            <path d="M1.500 1.500l11 11M12.500 1.500l-11 11" stroke="#111" strokeWidth="1.200" />
          </Svg>
        </div>
      </div>
      <div className="flex h-[25px] shrink-0 items-center border-b border-[#a0a0a0] text-[15px] leading-none">
        {menus.map(([t, w, m]) => (
          <Fit key={t} w={w} className={m}>{t}</Fit>
        ))}
      </div>
      <div className="flex h-[32px] shrink-0 items-center border-t border-b border-t-white border-b-[#a0a0a0] pl-[7px] text-[13px] leading-none">
        {mainTools.map((t, i) =>
          t.sep ? (
            <div key={i} className={"flex shrink-0 " + t.cls}>
              <div className="ml-px h-[24px] w-px bg-[#a0a0a0]" />
            </div>
          ) : (
            <div key={i} className={"flex shrink-0 items-center gap-[3px] " + t.cls}>
              <t.icon />
              {t.label && <Fit w={t.tw} className={t.dim ? "text-[#8f8f8f]" : ""}>{t.label}</Fit>}
            </div>
          )
        )}
      </div>
      <div className="flex h-[32px] shrink-0 items-center border-t border-b border-t-white border-b-[#a0a0a0] pl-px">
        {umlTools.map((art, i) => (
          <div key={i} className="flex w-[29px] shrink-0 justify-center">
            <Svg w={22} h={22} className="overflow-visible">
              {art}
            </Svg>
          </div>
        ))}
      </div>
      <div className="flex h-[867px] shrink-0">
        <LeftDocks />
        <Workspace />
      </div>
      <StatusBar />
      <Taskbar />
    </div>
  );
}
